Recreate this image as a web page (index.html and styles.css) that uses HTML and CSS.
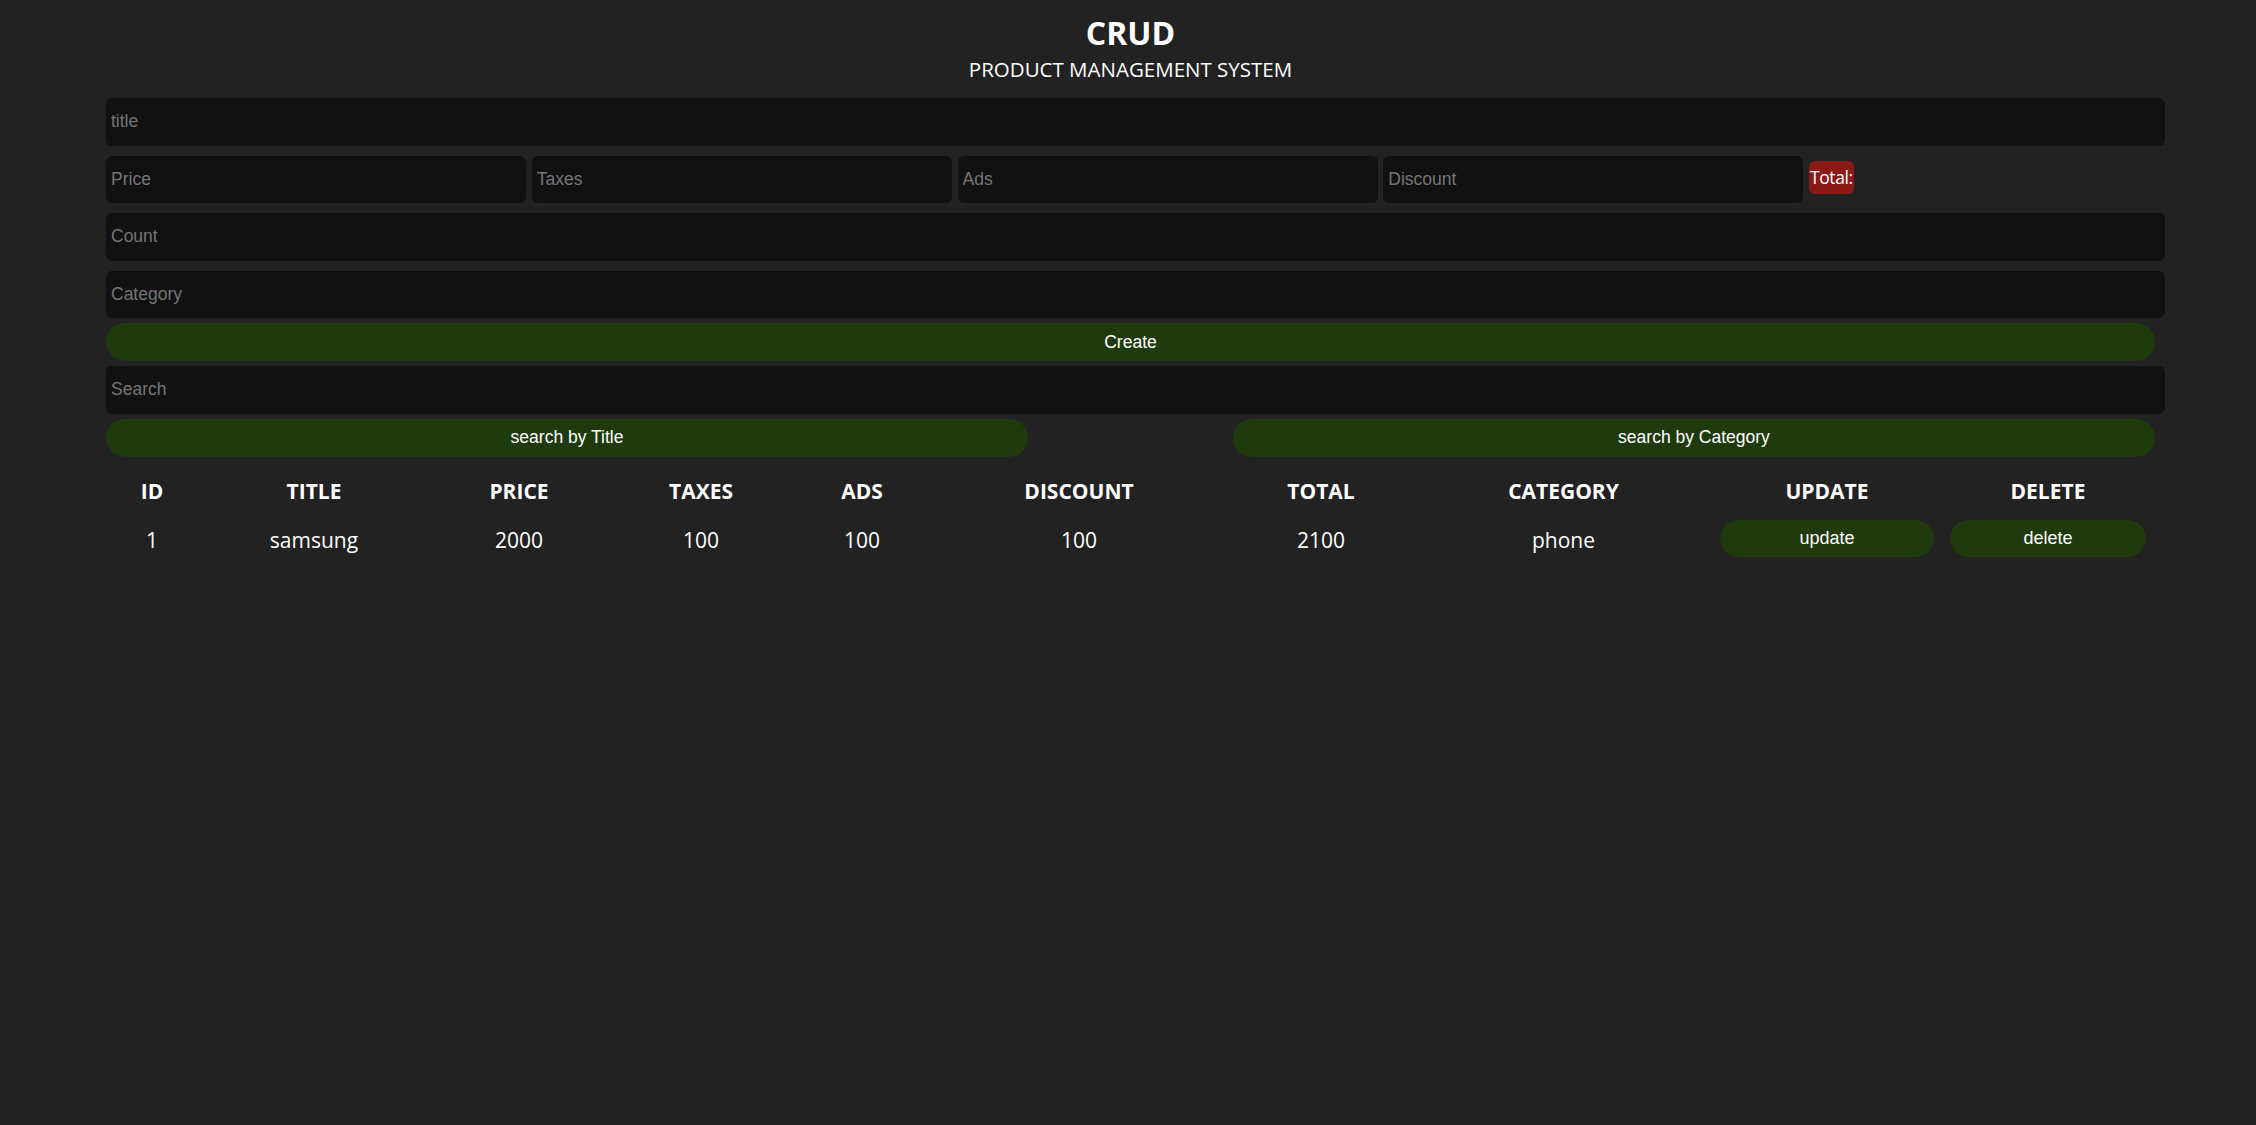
FILE: index.html
```html
<!DOCTYPE html>
<html lang="en">
<head>
<meta charset="utf-8">
<title>CRUD</title>
<link rel="stylesheet" href="styles.css">
</head>
<body>
<div class="crud">
  <div class="head">
    <h1>crud</h1>
    <p>product management system</p>
  </div>
  <div class="inputs">
    <input type="text" placeholder="title">
    <div class="price">
      <input type="number" placeholder="Price">
      <input type="number" placeholder="Taxes">
      <input type="number" placeholder="Ads">
      <input type="number" placeholder="Discount">
      <span class="total">Total:</span>
    </div>
    <input type="number" placeholder="Count">
    <input type="text" placeholder="Category">
    <button class="btn">Create</button>
    <input type="text" placeholder="Search">
    <div class="btn-search">
      <button class="btn">search by Title</button>
      <button class="btn">search by Category</button>
    </div>
  </div>
  <table class="outputs">
    <colgroup>
      <col class="c-id"><col class="c-title"><col class="c-price"><col class="c-taxes"><col class="c-ads">
      <col class="c-discount"><col class="c-total"><col class="c-category"><col class="c-update"><col class="c-delete">
    </colgroup>
    <thead>
      <tr>
        <th>id</th><th>title</th><th>price</th><th>taxes</th><th>ads</th>
        <th>discount</th><th>total</th><th>category</th><th>update</th><th>delete</th>
      </tr>
    </thead>
    <tbody>
      <tr>
        <td>1</td><td>samsung</td><td>2000</td><td>100</td><td>100</td>
        <td>100</td><td>2100</td><td>phone</td>
        <td class="act"><button class="btn small">update</button></td>
        <td class="act del"><button class="btn small">delete</button></td>
      </tr>
    </tbody>
  </table>
</div>
</body>
</html>
```
FILE: styles.css
```css
html, body {
  margin: 0;
  padding: 0;
  background: #222222;
  color: #ffffff;
  font-family: "Open Sans", "Noto Sans", sans-serif;
}

.crud {
  width: 2049px;
  margin-left: 106px;
}

.head {
  text-align: center;
  text-transform: uppercase;
  padding-top: 13px;
  margin-bottom: 11px;
}

.head h1 {
  margin: 0;
  font-size: 32px;
  line-height: 40px;
  font-weight: 700;
}

.head p {
  margin: 3px 0 0;
  font-size: 20.5px;
  line-height: 26px;
}

.inputs {
  display: flex;
  flex-direction: column;
}

.inputs input {
  box-sizing: border-box;
  width: calc(100% + 10px);
  height: 47.5px;
  margin: 5px 0;
  padding: 0 5px;
  border: none;
  outline: none;
  border-radius: 6px;
  background: #111111;
  color: #ffffff;
  font-family: "Liberation Sans", Arial, sans-serif;
  font-size: 17.5px;
}

.inputs input::placeholder {
  color: #757575;
}

.price {
  display: flex;
  align-items: center;
  gap: 5.75px;
}

.price input {
  flex: none;
  width: 420px;
}

.total {
  background: #8b1a17;
  color: #ffffff;
  border-radius: 6px;
  font-size: 17.5px;
  font-weight: 400;
  height: 32.7px;
  line-height: 32.7px;
  padding: 0 1px;
  margin-bottom: 4px;
  letter-spacing: -0.4px;
}

.btn {
  width: 100%;
  height: 38px;
  border: none;
  border-radius: 19px;
  background: #1f3a0c;
  color: #ffffff;
  font-family: "Liberation Sans", Arial, sans-serif;
  font-size: 17.5px;
  padding: 0;
  cursor: pointer;
}

.btn-search {
  display: flex;
  justify-content: space-between;
}

.btn-search .btn {
  width: 45%;
}

.outputs {
  width: 100%;
  table-layout: fixed;
  border-collapse: collapse;
  margin-top: 12px;
  text-align: center;
  font-size: 21px;
  line-height: 30px;
}

.c-id { width: 92px; }
.c-title { width: 232px; }
.c-price { width: 178px; }
.c-taxes { width: 186px; }
.c-ads { width: 136px; }
.c-discount { width: 298px; }
.c-total { width: 186px; }
.c-category { width: 299px; }
.c-update { width: 228px; }
.c-delete { width: 214px; }

.outputs th {
  text-transform: uppercase;
  font-weight: 700;
  padding: 7.5px 0;
}

.outputs td {
  padding: 7.5px 0;
  vertical-align: middle;
}

.outputs td.act {
  padding: 6px 7px 9px;
}

.outputs td.del {
  padding-left: 9px;
  padding-right: 9px;
}

.btn.small {
  height: 37px;
  border-radius: 18.5px;
  font-size: 18px;
  display: block;
}
```
